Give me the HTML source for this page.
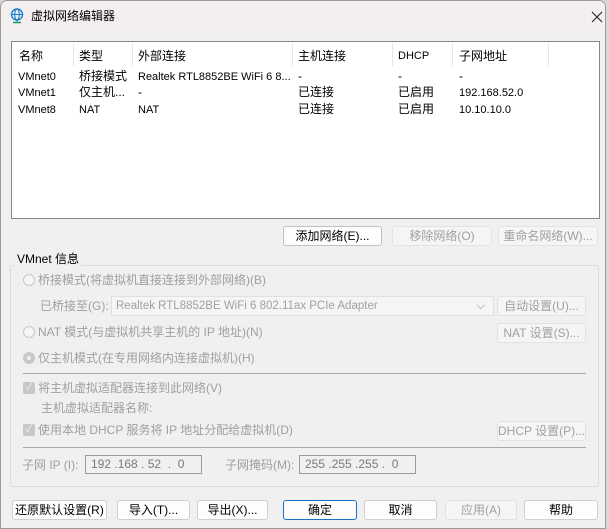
<!DOCTYPE html>
<html><head><meta charset="utf-8"><style>
*{margin:0;padding:0;box-sizing:border-box}
body{width:609px;height:529px;background:#d8d8d8;font-family:"Liberation Sans","Noto Sans CJK SC",sans-serif;font-size:12px;color:#000;position:relative;overflow:hidden}
.win{position:absolute;left:0;top:0;width:606px;height:529px;background:#f0f0f0;border:1px solid #9a9a9a;border-radius:7px 7px 0 0;overflow:hidden}
.title{position:absolute;left:0;top:0;width:100%;height:31px;background:#f3efef}
.a{position:absolute;white-space:nowrap;line-height:16px}
.g{color:#a0a0a0}
.btn{position:absolute;height:20px;border:1px solid #d0d0d0;border-radius:3px;background:#fdfdfd;text-align:center;line-height:18px;white-space:nowrap}
.btn.d{color:#a0a0a0;background:#f5f5f5;border-color:#e2e2e2}
.list{position:absolute;left:10px;top:40px;width:589px;height:178px;background:#fff;border:1px solid #828790}
.sep{position:absolute;top:2px;height:22px;width:1px;background:#e5e5e5}
.radio{position:absolute;width:12px;height:12px;border:1px solid #c8c8c8;border-radius:50%;background:#f5f5f5}
.chk{position:absolute;width:12px;height:12px;border-radius:2px;background:#c8c8c8;color:#f0f0f0;font-size:10px;line-height:12px;text-align:center}
.hr{position:absolute;height:1px;background:#a8a8a8}
.inp{position:absolute;height:19px;border:1px solid #9a9a9a;background:#f0f0f0;color:#7a7a7a;line-height:17px;white-space:pre;padding-left:5px}
</style></head><body>
<div class="win">
<div class="title"></div>
<svg style="position:absolute;left:9px;top:7px" width="14" height="16" viewBox="0 0 14 16"><circle cx="7" cy="6.5" r="5.5" fill="none" stroke="#1a7fd0" stroke-width="1.4"/><ellipse cx="7" cy="6.5" rx="2.3" ry="5.5" fill="none" stroke="#1a7fd0" stroke-width="1.1"/><line x1="1.5" y1="6.5" x2="12.5" y2="6.5" stroke="#1a7fd0" stroke-width="1.1"/><line x1="7" y1="12" x2="7" y2="14" stroke="#1a7fd0"/><line x1="3" y1="14.5" x2="11" y2="14.5" stroke="#20a060" stroke-width="1.4"/></svg>
<div class="a" style="left:30px;top:7px">虚拟网络编辑器</div>
<svg style="position:absolute;left:590px;top:10px" width="12" height="12" viewBox="0 0 12 12"><path d="M1 1L11 11M11 1L1 11" stroke="#222" stroke-width="1.1"/></svg>

<div class="list">
<div class="sep" style="left:61px"></div><div class="sep" style="left:120px"></div><div class="sep" style="left:280px"></div><div class="sep" style="left:380px"></div><div class="sep" style="left:440px"></div><div class="sep" style="left:536px"></div>
<div class="a" style="left:7px;top:6px">名称</div><div class="a" style="left:67px;top:6px">类型</div><div class="a" style="left:126px;top:6px">外部连接</div><div class="a" style="left:286px;top:6px">主机连接</div><div class="a" style="left:386px;top:6px;font-size:11px">DHCP</div><div class="a" style="left:447px;top:6px">子网地址</div>
<div class="a" style="left:6px;top:27px;font-size:11px">VMnet0</div><div class="a" style="left:67px;top:26px">桥接模式</div><div class="a" style="left:126px;top:27px;font-size:11px">Realtek RTL8852BE WiFi 6 8...</div><div class="a" style="left:286px;top:26px">-</div><div class="a" style="left:386px;top:26px">-</div><div class="a" style="left:447px;top:26px">-</div>
<div class="a" style="left:6px;top:43px;font-size:11px">VMnet1</div><div class="a" style="left:67px;top:42px">仅主机...</div><div class="a" style="left:126px;top:42px">-</div><div class="a" style="left:286px;top:42px">已连接</div><div class="a" style="left:386px;top:42px">已启用</div><div class="a" style="left:447px;top:43px;font-size:11px">192.168.52.0</div>
<div class="a" style="left:6px;top:60px;font-size:11px">VMnet8</div><div class="a" style="left:67px;top:60px;font-size:11px">NAT</div><div class="a" style="left:126px;top:60px;font-size:11px">NAT</div><div class="a" style="left:286px;top:59px">已连接</div><div class="a" style="left:386px;top:59px">已启用</div><div class="a" style="left:447px;top:60px;font-size:11px">10.10.10.0</div>
</div>

<div class="btn" style="left:282px;top:225px;width:99px;border-color:#c0c0c0">添加网络(E)...</div>
<div class="btn d" style="left:391px;top:225px;width:100px">移除网络(O)</div>
<div class="btn d" style="left:497px;top:225px;width:100px">重命名网络(W)...</div>

<div style="position:absolute;left:9px;top:264px;width:589px;height:222px;border:1px solid #dcdcdc;border-radius:3px"></div>
<div class="a" style="left:14px;top:250px;background:#f0f0f0;padding:0 2px">VMnet 信息</div>

<div class="radio" style="left:22px;top:273px"></div>
<div class="a g" style="left:37px;top:271px">桥接模式(将虚拟机直接连接到外部网络)(B)</div>
<div class="a g" style="left:39px;top:297px">已桥接至(G):</div>
<div style="position:absolute;left:110px;top:295px;width:383px;height:20px;border:1px solid #e0e0e0;background:#f5f5f5;color:#a0a0a0;line-height:18px;padding-left:4px;font-size:11.5px">Realtek RTL8852BE WiFi 6 802.11ax PCIe Adapter<span style="position:absolute;right:8px;top:0">⌵</span></div>
<div class="btn d" style="left:496px;top:295px;width:89px">自动设置(U)...</div>
<div class="radio" style="left:22px;top:325px"></div>
<div class="a g" style="left:37px;top:323px">NAT 模式(与虚拟机共享主机的 IP 地址)(N)</div>
<div class="btn d" style="left:496px;top:322px;width:89px">NAT 设置(S)...</div>
<div class="radio" style="left:22px;top:351px;background:#c8c8c8;border-color:#c8c8c8"><div style="position:absolute;left:3px;top:3px;width:4px;height:4px;border-radius:50%;background:#f0f0f0"></div></div>
<div class="a g" style="left:37px;top:349px">仅主机模式(在专用网络内连接虚拟机)(H)</div>
<div class="hr" style="left:22px;top:372px;width:563px"></div>
<div class="chk" style="left:22px;top:381px">✓</div>
<div class="a g" style="left:37px;top:379px">将主机虚拟适配器连接到此网络(V)</div>
<div class="a g" style="left:40px;top:399px">主机虚拟适配器名称:</div>
<div class="chk" style="left:22px;top:423px">✓</div>
<div class="a g" style="left:37px;top:421px">使用本地 DHCP 服务将 IP 地址分配给虚拟机(D)</div>
<div class="btn d" style="left:496px;top:420px;width:89px">DHCP 设置(P)...</div>
<div class="hr" style="left:22px;top:446px;width:563px"></div>
<div class="a g" style="left:21px;top:456px">子网 IP (I):</div>
<div class="inp" style="left:84px;top:454px;width:117px">192 .168 . 52  .  0</div>
<div class="a g" style="left:224px;top:456px">子网掩码(M):</div>
<div class="inp" style="left:298px;top:454px;width:117px">255 .255 .255 .  0</div>

<div class="btn" style="left:11px;top:499px;width:95px">还原默认设置(R)</div>
<div class="btn" style="left:116px;top:499px;width:73px">导入(T)...</div>
<div class="btn" style="left:196px;top:499px;width:71px">导出(X)...</div>
<div class="btn" style="left:282px;top:499px;width:74px;border-color:#1f6fc4">确定</div>
<div class="btn" style="left:363px;top:499px;width:73px">取消</div>
<div class="btn d" style="left:444px;top:499px;width:72px">应用(A)</div>
<div class="btn" style="left:523px;top:499px;width:74px">帮助</div>
</div>
</body></html>
